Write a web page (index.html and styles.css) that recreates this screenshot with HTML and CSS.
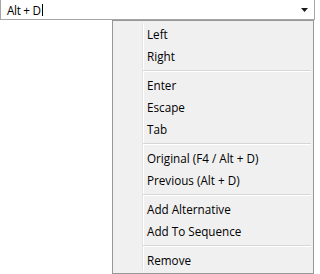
FILE: index.html
```html
<!DOCTYPE html>
<html>
<head>
<meta charset="utf-8">
<link rel="stylesheet" href="styles.css">
</head>
<body>
<div class="combo">
  <span class="value">Alt + D</span><span class="caret"></span>
  <svg class="arrow" width="7" height="4" viewBox="0 0 7 4"><path d="M0 0h7L3.5 4z" fill="#1a1a1a"/></svg>
</div>
<div class="menu">
  <div class="list">
    <div class="item">Left</div>
    <div class="item">Right</div>
    <div class="sep"></div>
    <div class="item">Enter</div>
    <div class="item">Escape</div>
    <div class="item">Tab</div>
    <div class="sep"></div>
    <div class="item">Original (F4 / Alt + D)</div>
    <div class="item">Previous (Alt + D)</div>
    <div class="sep"></div>
    <div class="item">Add Alternative</div>
    <div class="item">Add To Sequence</div>
    <div class="sep"></div>
    <div class="item">Remove</div>
  </div>
</div>
</body>
</html>
```
FILE: styles.css
```css
html, body {
  margin: 0;
  padding: 0;
  background: #ffffff;
}
body {
  font-family: "Open Sans", "Noto Sans", sans-serif;
  font-size: 11.7px;
  color: #000;
}
.combo {
  box-sizing: border-box;
  width: 315px;
  height: 20px;
  border: 1px solid #a6a6a6;
  border-top: 0;
  background: #fff;
  display: flex;
  align-items: center;
  padding-left: 6px;
  position: relative;
}
.value {
  line-height: 18px;
  letter-spacing: -0.3px;
}
.caret {
  display: inline-block;
  width: 1px;
  height: 12px;
  background: #000;
  margin-left: 1px;
}
.arrow {
  margin-left: auto;
  margin-right: 6px;
  margin-top: 1px;
}
.menu {
  box-sizing: border-box;
  margin-left: 112px;
  width: 202px;
  border: 1px solid #979797;
  background: #f0f0f0;
  padding: 2px;
}
.list {
  background: linear-gradient(to right, transparent 27px, #e2e3e3 27px, #e2e3e3 28px, #ffffff 28px, #ffffff 29px, transparent 29px);
}
.item {
  height: 22px;
  line-height: 23px;
  padding-left: 32px;
  white-space: nowrap;
}
.sep {
  height: 1px;
  margin: 3px 0 2px 28px;
  background: #d7d7d7;
  border-bottom: 1px solid #ffffff;
}
```
